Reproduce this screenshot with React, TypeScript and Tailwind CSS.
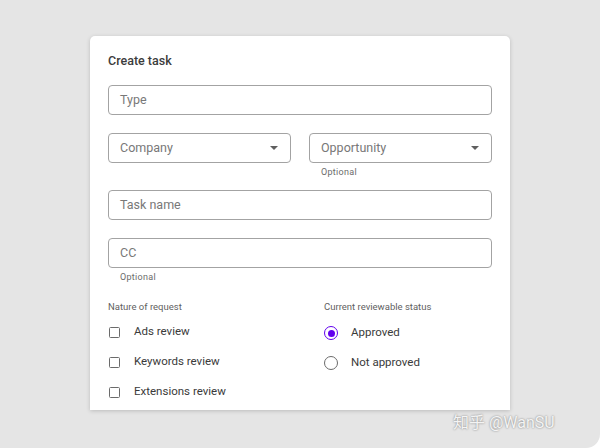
import { ReactNode } from 'react';

const font = { fontFamily: 'Roboto, "Noto Sans CJK SC", sans-serif' };

function Field({ label, select = false }: { label: string; select?: boolean }) {
  return (
    <div className="flex h-[30px] items-center justify-between rounded-[4px] border border-[#a3a3a3] bg-white pl-[11px] pr-[12px]">
      <span className="text-[12.5px] text-[#787878]">{label}</span>
      {select && (
        <svg width="8" height="4" viewBox="0 0 8 4">
          <path d="M0 0 L8 0 L4 4 Z" fill="#5f5f5f" />
        </svg>
      )}
    </div>
  );
}

function Hint({ children }: { children: ReactNode }) {
  return <div className="mt-[3px] pl-[12px] text-[9px] leading-[12px] tracking-[0.3px] text-[#6b6b6b]">{children}</div>;
}

function CheckRow({ label }: { label: string }) {
  return (
    <div className="flex h-[24px] items-center">
      <div className="ml-[1px] h-[11px] w-[11px] rounded-[1.5px] border-[1.5px] border-[#6b6b6b]" />
      <span className="ml-[14px] text-[11.5px] text-[#3a3a3a]">{label}</span>
    </div>
  );
}

function RadioRow({ label, checked = false }: { label: string; checked?: boolean }) {
  return (
    <div className="flex h-[24px] items-center">
      <div
        className={`flex h-[14px] w-[14px] items-center justify-center rounded-full border-[1.5px] ${
          checked ? 'border-[#6200ee]' : 'border-[#6b6b6b]'
        }`}
      >
        {checked && <div className="h-[7px] w-[7px] rounded-full bg-[#6200ee]" />}
      </div>
      <span className="ml-[13px] text-[11.5px] text-[#3a3a3a]">{label}</span>
    </div>
  );
}

export default function App() {
  return (
    <div className="h-[448px] w-[600px] bg-white" style={font}>
      <div className="relative h-[448px] w-[600px] overflow-hidden rounded-br-[14px] bg-[#e5e5e5] pt-[36px]">
        {/* Card */}
        <div className="ml-[90px] h-[374px] w-[420px] overflow-hidden rounded-t-[5px] bg-white px-[18px] pt-[17px] shadow-[0_1px_4px_rgba(0,0,0,0.18)]">
          <h2 className="text-[12.5px] font-medium leading-[16px] text-[#3c3c3c]">Create task</h2>

          <div className="mt-[16px]">
            <Field label="Type" />
          </div>

          <div className="mt-[18px] grid grid-cols-2 gap-[18px]">
            <div>
              <Field label="Company" select />
            </div>
            <div>
              <Field label="Opportunity" select />
              <Hint>Optional</Hint>
            </div>
          </div>

          <div className="mt-[12px]">
            <Field label="Task name" />
          </div>

          <div className="mt-[18px]">
            <Field label="CC" />
            <Hint>Optional</Hint>
          </div>

          <div className="mt-[18px] grid grid-cols-[216px_1fr]">
            <div>
              <div className="text-[9.5px] leading-[12px] text-[#5f5f5f]">Nature of request</div>
              <div className="mt-[7px] flex flex-col gap-[6px]">
                <CheckRow label="Ads review" />
                <CheckRow label="Keywords review" />
                <CheckRow label="Extensions review" />
              </div>
            </div>
            <div>
              <div className="text-[9.5px] leading-[12px] text-[#5f5f5f]">Current reviewable status</div>
              <div className="mt-[8px] flex flex-col gap-[6px]">
                <RadioRow label="Approved" checked />
                <RadioRow label="Not approved" />
              </div>
            </div>
          </div>
        </div>

        {/* Watermark */}
        <div className="absolute left-[453px] top-[413px] text-[16px] leading-[20px] text-[#f4f4f4] [text-shadow:0_0_2px_rgba(0,0,0,0.5)]">
          知乎 @WanSU
        </div>
      </div>
    </div>
  );
}
